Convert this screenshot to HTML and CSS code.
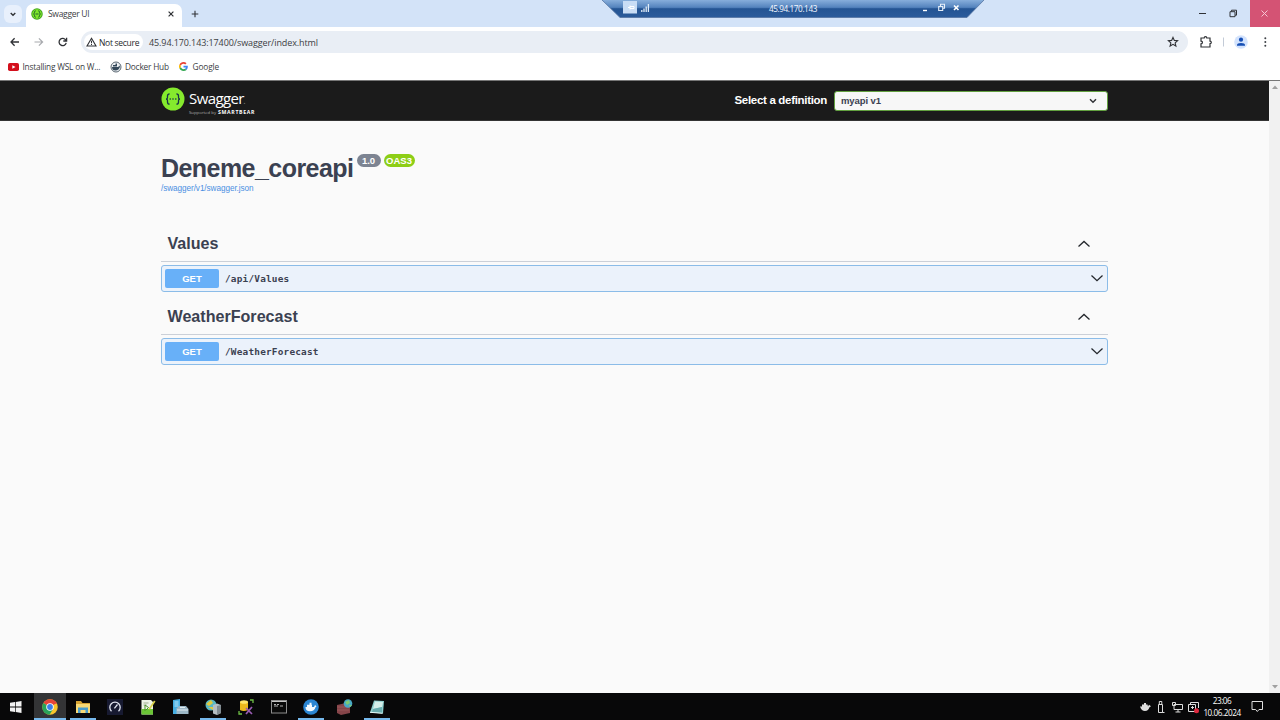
FILE: index.html
```html
<!DOCTYPE html>
<html lang="en">
<head>
<meta charset="utf-8">
<title>Swagger UI</title>
<link rel="stylesheet" href="styles.css">
</head>
<body>
<div class="tabstrip">
  <div class="tab-search"><svg width="8" height="8" viewBox="0 0 8 8"><path d="M1.700 3L4 5.200 6.300 3" class="ink" stroke-width="1.400"/></svg></div>
  <div class="tab">
    <svg width="12" height="12" viewBox="0 0 24 24"><circle cx="12" cy="12" r="11.500" fill="#43a51e"/><circle cx="12" cy="12" r="9.500" fill="#7fe52c"/><path d="M9.500 5.500q-2.500 0-2.500 3 0 3.500-2 3.500 2 0 2 3.500 0 3 2.500 3M14.500 5.500q2.500 0 2.500 3 0 3.500 2 3.500-2 0-2 3.500 0 3-2.500 3M9 12h6" fill="none" stroke="#246b2b" stroke-width="2"/></svg>
    <span class="tab-title">Swagger UI</span>
    <svg class="tab-close" width="8" height="8" viewBox="0 0 8 8"><path d="M1.600 1.600l4.800 4.800M6.400 1.600L1.600 6.400" class="ink" stroke-width="1.200"/></svg>
  </div>
  <svg class="new-tab" width="8" height="8" viewBox="0 0 8 8"><path d="M4 .7v6.600M.7 4h6.600" class="ink" stroke-width="1.100"/></svg>
  <div class="window-buttons">
    <svg width="30" height="27" viewBox="0 0 30 27"><path d="M10 13.500h7" class="ink"/></svg>
    <svg width="31" height="27" viewBox="0 0 31 27"><path d="M11 11.700h5v5h-5zM12.500 11.500v-1.300h5v5H16" class="ink"/></svg>
    <svg class="close" width="30" height="27" viewBox="0 0 30 27"><path d="M11.500 10.500l6 6M17.500 10.500l-6 6" stroke="#f6c6d3" stroke-width="1" fill="none"/></svg>
  </div>
  <div class="rdp">
    <svg width="382" height="18" viewBox="0 0 382 18">
      <defs><linearGradient id="bar" x2="0" y2="1"><stop offset="0" stop-color="#87aedb"/><stop offset=".42" stop-color="#5483bd"/><stop offset=".5" stop-color="#245493"/><stop offset="1" stop-color="#2b5b9b"/></linearGradient></defs>
      <path d="M0 0h382l-17 17.500H18z" fill="url(#bar)"/><path d="M0 0l18 17.500h347L382 0" fill="none" stroke="#5575a2" stroke-width=".8"/>
      <rect x="21" y="1" width="14" height="12.500" fill="#c9ddf5"/><path d="M26 7.500h2m0-2v4m0-3h4v2h-4" fill="none" stroke="#fff"/>
      <path d="M39.800 12v-2M42 12V8.500M44.200 12V6.500M46.400 12V4" stroke="#e0ecf8" stroke-width="1.300"/>
      <path d="M321 10.500h4" stroke="#fff" stroke-width="1.400"/><path d="M336.700 6.500h4v4h-4zM338.500 6V4.200h4v4H341" fill="none" stroke="#e6eff9" stroke-width="1.100"/><path d="M352 5.500l4.500 4.500m0-4.500L352 10" stroke="#fff" stroke-width="1.600"/>
    </svg>
    <span class="rdp-title">45.94.170.143</span>
  </div>
</div>
<div class="toolbar">
  <svg class="nav" width="80" height="30" viewBox="0 0 80 30"><path d="M19 15h-8m3.600-3.700L11 15l3.600 3.700" class="ink" stroke-width="1.300"/><path d="M34.500 15h8m-3.600-3.700l3.700 3.700-3.700 3.700" fill="none" stroke="#a8aaae" stroke-width="1.200"/><path d="M65.800 13.200a3.600 3.600 0 1 0 .4 2.600M66.600 10.800v3.200h-3.300" class="ink" stroke-width="1.300"/></svg>
  <div class="omnibox">
    <div class="security"><svg width="11" height="10" viewBox="0 0 11 10"><path d="M5.500 1.300L10 9H1z" class="ink" stroke-width="1.100"/><path d="M5.500 3.700v2.600M5.500 7v1" class="ink" stroke-width="1"/></svg><span>Not secure</span></div>
    <span class="url">45.94.170.143:17400/swagger/index.html</span>
    <svg class="star" width="12" height="12" viewBox="0 0 12 12"><path d="M6 1.400l1.350 3 3.250.3-2.450 2.150.75 3.200L6 8.350l-2.900 1.700.75-3.200L1.400 4.700l3.250-.3z" class="ink" stroke-width="1.100"/></svg>
  </div>
  <svg width="92" height="30" viewBox="0 0 92 30"><path d="M13 11h3.200q0-1.300 1.300-1.300t1.300 1.300H22v3.200q1.300 0 1.300 1.200T22 16.700V20h-9v-3.200q1.400 0 1.400-1.300T13 14.200z" class="ink" stroke-width="1.200"/><path d="M35.500 10.500v9" stroke="#c3cbd7"/><circle cx="53" cy="15" r="6.800" fill="#d3e3fd"/><circle cx="53" cy="12.700" r="2.100" fill="#164fb5"/><path d="M49 18.700v-.8q0-2 4-2t4 2v.8z" fill="#164fb5"/><g fill="#3e4146"><circle cx="77.300" cy="11.200" r="1"/><circle cx="77.300" cy="15" r="1"/><circle cx="77.300" cy="18.800" r="1"/></g></svg>
</div>
<div class="bookmarks">
  <svg width="11" height="8" viewBox="0 0 11 8"><rect width="11" height="8" rx="1.800" fill="#d30f1c"/><path d="M4.300 2.200v3.600L7.500 4z" fill="#fff"/></svg><span class="bm bm-wsl">Installing WSL on W...</span>
  <svg width="12" height="12" viewBox="0 0 12 12"><circle cx="6" cy="6" r="5" fill="#eef1f4" stroke="#5b6872"/><path d="M2 6h6.300l1-1.500.7 1.300q-1 3.700-4.500 3.700T2 6zM3 4h4v1.500H3zM5.500 2.500H7V4H5.500z" fill="#34495a"/></svg><span class="bm bm-docker">Docker Hub</span>
  <svg width="9" height="9" viewBox="0 0 48 48"><path fill="#EA4335" d="M24 9.500c3.500 0 6.700 1.200 9.200 3.600l6.900-6.900C35.900 2.400 30.500 0 24 0 14.600 0 6.500 5.400 2.600 13.200l8 6.200C12.400 13.700 17.700 9.500 24 9.500z"/><path fill="#4285F4" d="M47 24.500c0-1.600-.2-3.100-.4-4.500H24v9h12.900c-.6 3-2.300 5.500-4.800 7.200l7.700 6C44.400 38 47 31.800 47 24.500z"/><path fill="#FBBC05" d="M10.500 28.600a14 14 0 0 1 0-9.200l-8-6.200a24 24 0 0 0 0 21.600z"/><path fill="#34A853" d="M24 48c6.500 0 12-2.100 15.900-5.800l-7.700-6c-2.200 1.500-4.900 2.300-8.200 2.300-6.300 0-11.600-4.200-13.500-9.900l-8 6.200C6.500 42.600 14.600 48 24 48z"/></svg><span class="bm bm-google">Google</span>
</div>
<div class="viewport">
  <main class="page">
    <header class="topbar">
      <svg class="logo-mark" width="24" height="24" viewBox="0 0 24 24"><circle cx="12" cy="12" r="11.500" fill="#85ea2d"/><path d="M8.600 6.800q-2.100 0-2.100 2.200v1.400q0 1.600-1.500 1.600 1.500 0 1.500 1.600V15q0 2.200 2.100 2.200M15.400 6.800q2.100 0 2.100 2.200v1.400q0 1.600 1.500 1.600-1.500 0-1.500 1.600V15q0 2.200-2.100 2.200" fill="none" stroke="#173647" stroke-width="1.300"/><path d="M8.600 12h1.200m1.600 0h1.200m1.600 0h1.200" stroke="#173647" stroke-width="1.300"/></svg>
      <div class="logo-text"><div class="logo-name">Swagger<i>.</i></div><div class="logo-by"><span>Supported by</span><b>SMARTBEAR</b></div></div>
      <span class="select-label">Select a definition</span>
      <div class="select"><span>myapi v1</span><svg width="8" height="6" viewBox="0 0 8 6"><path d="M1 1.300L4 4.300l3-3" class="ink" stroke-width="1.500"/></svg></div>
    </header>
    <div class="content">
      <div class="info"><h1>Deneme_coreapi</h1><span class="badge version">1.0</span><span class="badge oas">OAS3</span></div>
      <a class="spec-link">/swagger/v1/swagger.json</a>
      <section class="group">
        <div class="group-head"><h2>Values</h2><svg width="14" height="10" viewBox="0 0 14 10"><path d="M1.500 7.500L7 2.500l5.500 5" class="dark"/></svg></div>
        <div class="operation"><span class="method">GET</span><span class="path">/api/Values</span><svg width="14" height="10" viewBox="0 0 14 10"><path d="M1.500 2.500L7 7.700l5.500-5.200" class="dark"/></svg></div>
      </section>
      <section class="group">
        <div class="group-head"><h2>WeatherForecast</h2><svg width="14" height="10" viewBox="0 0 14 10"><path d="M1.500 7.500L7 2.500l5.500 5" class="dark"/></svg></div>
        <div class="operation"><span class="method">GET</span><span class="path">/WeatherForecast</span><svg width="14" height="10" viewBox="0 0 14 10"><path d="M1.500 2.500L7 7.700l5.500-5.200" class="dark"/></svg></div>
      </section>
    </div>
  </main>
  <div class="scrollbar"><svg width="6" height="4" viewBox="0 0 6 4"><path d="M0 4l3-3.500L6 4z" fill="#a0a0a0"/></svg><svg width="6" height="4" viewBox="0 0 6 4"><path d="M0 0l3 3.500L6 0z" fill="#a0a0a0"/></svg></div>
</div>
<footer class="taskbar">
  <div class="task start"><svg width="12" height="12" viewBox="0 0 12 12"><path d="M0 1.800L5 1v4.600H0zM5.700.9L11.500 0v5.600H5.700zM0 6.400h5V11l-5-.8zM5.700 6.400h5.800V12l-5.800-.9z" fill="#f2f2f2"/></svg></div>
  <div class="task open active"><svg width="16" height="16" viewBox="0 0 32 32"><circle cx="16" cy="16" r="15.500" fill="#f9c52c"/><path d="M16 16L2.600 8.200a15.500 15.500 0 0 1 26.800 0z" fill="#e5443a"/><path d="M16 16L2.600 8.200A15.500 15.500 0 0 0 15 31.500l7-11z" fill="#29a35a"/><path d="M16 9h13.800L28 6.500 9 7z" fill="#e5443a"/><circle cx="16" cy="16" r="7.500" fill="#fff"/><circle cx="16" cy="16" r="5.800" fill="#3c80ea"/></svg></div>
  <div class="task open"><svg width="16" height="14" viewBox="0 0 16 14"><path d="M1 1h5l1.500 2H15v10H1z" fill="#d6a334"/><path d="M1 4h14v9H1z" fill="#f7d976"/><path d="M3 7.500h10V13h-2.500v-3h-5v3H3z" fill="#4a9dcc"/></svg></div>
  <div class="task"><svg width="16" height="16" viewBox="0 0 16 16"><rect width="16" height="16" fill="#171a31"/><path d="M4.500 12.200a5.200 5.200 0 1 1 7 0M7.400 9.300L10.500 5.500" fill="none" stroke="#dfe3ef" stroke-width="1.300"/></svg></div>
  <div class="task"><svg width="16" height="16" viewBox="0 0 16 16"><path d="M1.500 1h9.500l2 2v12.500H1.500z" fill="#eef4e6"/><path d="M1.500 10H13v5.500H1.500z" fill="#6bc536"/><path d="M3.500 4h5M3.500 6h3" stroke="#9fae91"/><path d="M5 12V6l3.500 2.500L6 11" stroke="#4a9329" fill="none"/><path d="M8.500 10l5.500-8.500 1.500 1L10 10.500z" fill="#d6ce48"/></svg></div>
  <div class="task"><svg width="17" height="16" viewBox="0 0 17 16"><path d="M1 1l7-1v15H1z" fill="#46aee2"/><path d="M2.500 3h4m-4 2h4m-4 2h4" stroke="#b8e6fa"/><path d="M4.500 9.500L7 7h7l2.500 3v5h-12z" fill="#9db8c7"/><path d="M5 11h11M8 8.500h5" stroke="#e3edf2"/></svg></div>
  <div class="task open"><svg width="17" height="16" viewBox="0 0 17 16"><circle cx="6" cy="6" r="5.500" fill="#58b8c4"/><path d="M1 5l5-4 2 3-4 3zm2 3h5v3z" fill="#e0c93c"/><path d="M8 6l4-1.500L16 6v8l-4 2-4-1.500z" fill="#b5bec3"/><path d="M12 7l4-1v8l-4 2z" fill="#808b91"/></svg></div>
  <div class="task"><svg width="16" height="16" viewBox="0 0 16 16"><path d="M2 3v8q3.500 2 8 0V3z" fill="#edb91c"/><ellipse cx="6" cy="3" rx="4" ry="1.800" fill="#ffe56a"/><path d="M1 12v3h3M12 1h3v3" fill="none" stroke="#6ebd45" stroke-width="1.300"/><path d="M8 9l6 6M14 8l-6 7" stroke="#9a5cb3" stroke-width="1.700"/></svg></div>
  <div class="task"><svg width="16" height="14" viewBox="0 0 16 14"><rect x=".5" y=".5" width="15" height="12.500" fill="#090909" stroke="#8d8d8d"/><path d="M1 1.500h14" stroke="#c6c6c6"/><path d="M3 4.500h2m1 0h2M3 6h4m2 0h3" stroke="#ddd" stroke-width=".8"/></svg></div>
  <div class="task open"><svg width="16" height="16" viewBox="0 0 16 16"><circle cx="8" cy="8" r="7.800" fill="#2b86d3"/><path d="M2.500 8h8.500l1-2 1.500 1.300-1 1q-1 4-5.500 4T2.500 8zM4 5.700h5v2.400H4zM6.500 3.800h2v2h-2z" fill="#f3faff"/></svg></div>
  <div class="task"><svg width="17" height="16" viewBox="0 0 17 16"><path d="M1 6l9-2 4 3v7l-9 2-4-2z" fill="#854449"/><path d="M1 8h12M1 11h12" stroke="#a06063" stroke-width=".7"/><circle cx="12" cy="4.500" r="4.300" fill="#48a8c5"/><path d="M9 3l4-2 1 3-3 2zm4 3h3l-2 2z" fill="#7dcb74"/></svg></div>
  <div class="task open"><svg width="16" height="16" viewBox="0 0 16 16"><path d="M5 1.500l10 .5-1 12.500L1 13.500z" fill="#8ecfce"/><path d="M6 2.500l8 .5-1 5-9 2z" fill="#d4eee9"/><path d="M4 10l9-2v6L3 13z" fill="#69adaf"/><path d="M1 13.300l12.500 1" stroke="#e7fbfa"/></svg></div>
  <div class="tray">
    <svg width="70" height="16" viewBox="0 0 70 16"><path d="M1 7.500h2V5.500h2V4h2v1.500h1.500l.5 2 1-1.700 2 1.500-1.500 1Q9.500 12 6 12T1 7.500z" fill="#ddd"/><path d="M19.500 5.500h4v8h-4zM20.300 5V2.500h2.500V5M23.500 11v2.500h2" fill="none" stroke="#ddd"/><path d="M35 5.500h8.500v5h-8.500zM39 11v2m-2.500 0h5M33.500 3.500h3v3h-3z" fill="none" stroke="#ddd"/><path d="M49.500 5.500h7v7h-7zM51.500 5V3.500h8V9M53.500 7v3m-1.500-1.500h3" fill="none" stroke="#ddd"/><circle cx="57.500" cy="11.700" r="2.500" fill="#db273c"/></svg>
    <div class="clock"><span>23:06</span><span>10.06.2024</span></div>
    <svg class="notice" width="13" height="13" viewBox="0 0 13 13"><path d="M1 1.500h10.500v8H8L6.300 11.500 4.600 9.500H1z" fill="none" stroke="#e0e0e0"/></svg>
  </div>
</footer>
</body>
</html>
```
FILE: styles.css
```css
* { box-sizing: border-box; }
body { margin: 0; width: 1280px; height: 720px; overflow: hidden; display: flex; flex-direction: column; background: #fff; font-family: "Open Sans", "Noto Sans", sans-serif; font-size: 8.5px; color: #3c4043; }
svg { display: block; flex: none; }
span, h1, h2 { white-space: nowrap; }
.ink { fill: none; stroke: #303236; }
.dark { fill: none; stroke: #24272c; stroke-width: 1.3; }

.tabstrip { position: relative; display: flex; flex: none; align-items: center; height: 27px; background: #d3e3f8; }
.tab-search { display: grid; place-items: center; width: 18px; height: 18px; margin-left: 4px; border-radius: 6px; background: #e8f0fc; }
.tab { display: flex; align-items: center; align-self: flex-end; width: 156px; height: 23px; margin-left: 4px; padding: 0 7px 4px 5px; border-radius: 7px 7px 0 0; background: #fff; }
.tab-title { margin-left: 5px; font-size: 8.5px; letter-spacing: -.3px; }
.tab-close { margin-left: auto; }
.new-tab { margin-left: 8.5px; }
.window-buttons { display: flex; margin-left: auto; }
.close { background: #d45374; }
.rdp { position: absolute; left: 602px; top: 0; width: 382px; height: 18px; }
.rdp-title { position: absolute; left: 0; width: 100%; top: 3px; text-align: center; font-size: 8.2px; line-height: 12px; letter-spacing: -.42px; color: #f4f8ff; }

.toolbar { display: flex; flex: none; align-items: center; height: 30px; }
.omnibox { display: flex; align-items: center; width: 1106.5px; height: 22px; margin-left: 1px; padding: 0 9px 0 3px; border-radius: 11px; background: #e9eef5; }
.omnibox + svg { margin-left: .5px; }
.security { display: flex; align-items: center; width: 59px; height: 16px; padding-left: 2px; border-radius: 8px; background: #fff; color: #27292c; }
.security span { margin-left: 2px; letter-spacing: -.3px; }
.url { margin-left: 6px; font-size: 9px; letter-spacing: -.1px; }
.star { margin-left: auto; }

.bookmarks { display: flex; flex: none; align-items: center; height: 23px; padding: 0 0 4px 8px; }
.bm { font-size: 8.3px; letter-spacing: -.2px; }
.bm-wsl { width: 87px; margin-left: 3.5px; }
.bm-docker { width: 54px; margin-left: 3.5px; }
.bm-google { margin-left: 4.5px; letter-spacing: -.1px; }

.viewport { display: flex; flex: 1; min-height: 0; border-top: 1px solid #777; }
.page { width: 1269px; background: #fafafa; font-family: "Liberation Sans", Arial, sans-serif; color: #3b4151; }
.topbar { display: flex; align-items: center; height: 40px; padding: 0 161px; background: #1b1b1b; border-bottom: 1px solid #333; color: #fff; }
.logo-mark { margin-bottom: 4px; }
.logo-text { width: 70px; margin-left: 4px; font-family: "Open Sans", sans-serif; }
.logo-name { margin-top: 3px; font-size: 15px; line-height: 16px; letter-spacing: -.6px; }
.logo-name i { color: #777; font-size: 9px; }
.logo-by { display: flex; gap: 2px; font-size: 4.3px; line-height: 6px; }
.logo-by span { color: #aaa; }
.logo-by b { font-size: 5.2px; letter-spacing: .65px; }
.select-label { margin-left: auto; padding-bottom: 1px; font-size: 11.5px; font-weight: bold; letter-spacing: -.31px; }
.select { display: flex; align-items: center; justify-content: space-between; width: 274px; height: 20px; margin-left: 7px; padding: 0 10px 0 6px; border: 1.5px solid #62a03f; border-radius: 3px; background: #f7f7f7; color: #3b4151; font-size: 9.5px; font-weight: bold; letter-spacing: -.1px; }

.content { width: 947px; margin-left: 161px; padding-top: 33px; }
.info { display: flex; height: 28px; }
h1, h2 { margin: 0; font-weight: bold; }
h1 { width: 195.5px; font-size: 25px; line-height: 28px; letter-spacing: -.55px; }
.badge { height: 13px; border-radius: 7px; color: #fff; text-align: center; font-size: 9.5px; line-height: 13px; font-weight: bold; }
.version { width: 24px; background: #7d8492; }
.oas { width: 31px; margin-left: 3px; background: #8dce16; }
.spec-link { display: block; height: 13px; font-size: 8.2px; line-height: 14px; letter-spacing: -.07px; color: #4a8fe2; }
.group { margin-bottom: 6px; }
.group:first-of-type { margin-top: 32px; }
.group-head { display: flex; align-items: center; justify-content: space-between; height: 35px; padding: 0 17px 1px 6.5px; border-bottom: 1px solid #cbd0d8; }
.group-head h2 { font-size: 16.1px; }
.group + .group .group-head { height: 37px; padding-top: 1px; padding-bottom: 0; }
.operation { display: flex; align-items: center; height: 27px; margin-top: 3px; padding: 0 3px 1px; border: 1px solid #8bbce8; border-radius: 3px; background: #ebf2fb; }
.method { width: 54px; height: 19px; border-radius: 2px; background: #61affe; background: #68b0f8; color: #fff; font-size: 9.5px; font-weight: bold; line-height: 19px; text-align: center; }
.path { margin-left: 6px; font-family: "DejaVu Sans Mono", monospace; font-size: 9.4px; font-weight: bold; letter-spacing: .21px; }
.operation svg { margin-left: auto; }
.scrollbar { display: flex; flex-direction: column; justify-content: space-between; align-items: center; width: 11px; padding: 4px 0; background: #f1f1f1; }

.taskbar { display: flex; flex: none; height: 27px; background: #080809; color: #fff; }
.task { display: grid; place-items: center; width: 32.7px; height: 27px; }
.start { width: 33.5px; padding-right: 2px; }
.task.open { background: linear-gradient(#76b9ed, #76b9ed) center bottom / 26px 2px no-repeat; }
.task.active { background: linear-gradient(#76b9ed, #76b9ed) center bottom / 32px 2px no-repeat #333436; }
.tray { display: flex; align-items: center; width: 142px; margin-left: auto; padding-left: 1px; }
.clock { display: flex; flex: none; flex-direction: column; align-items: center; width: 36px; margin-left: -5px; font-size: 8.2px; line-height: 12px; letter-spacing: -.45px; }
.notice { margin-left: 11px; }
```
